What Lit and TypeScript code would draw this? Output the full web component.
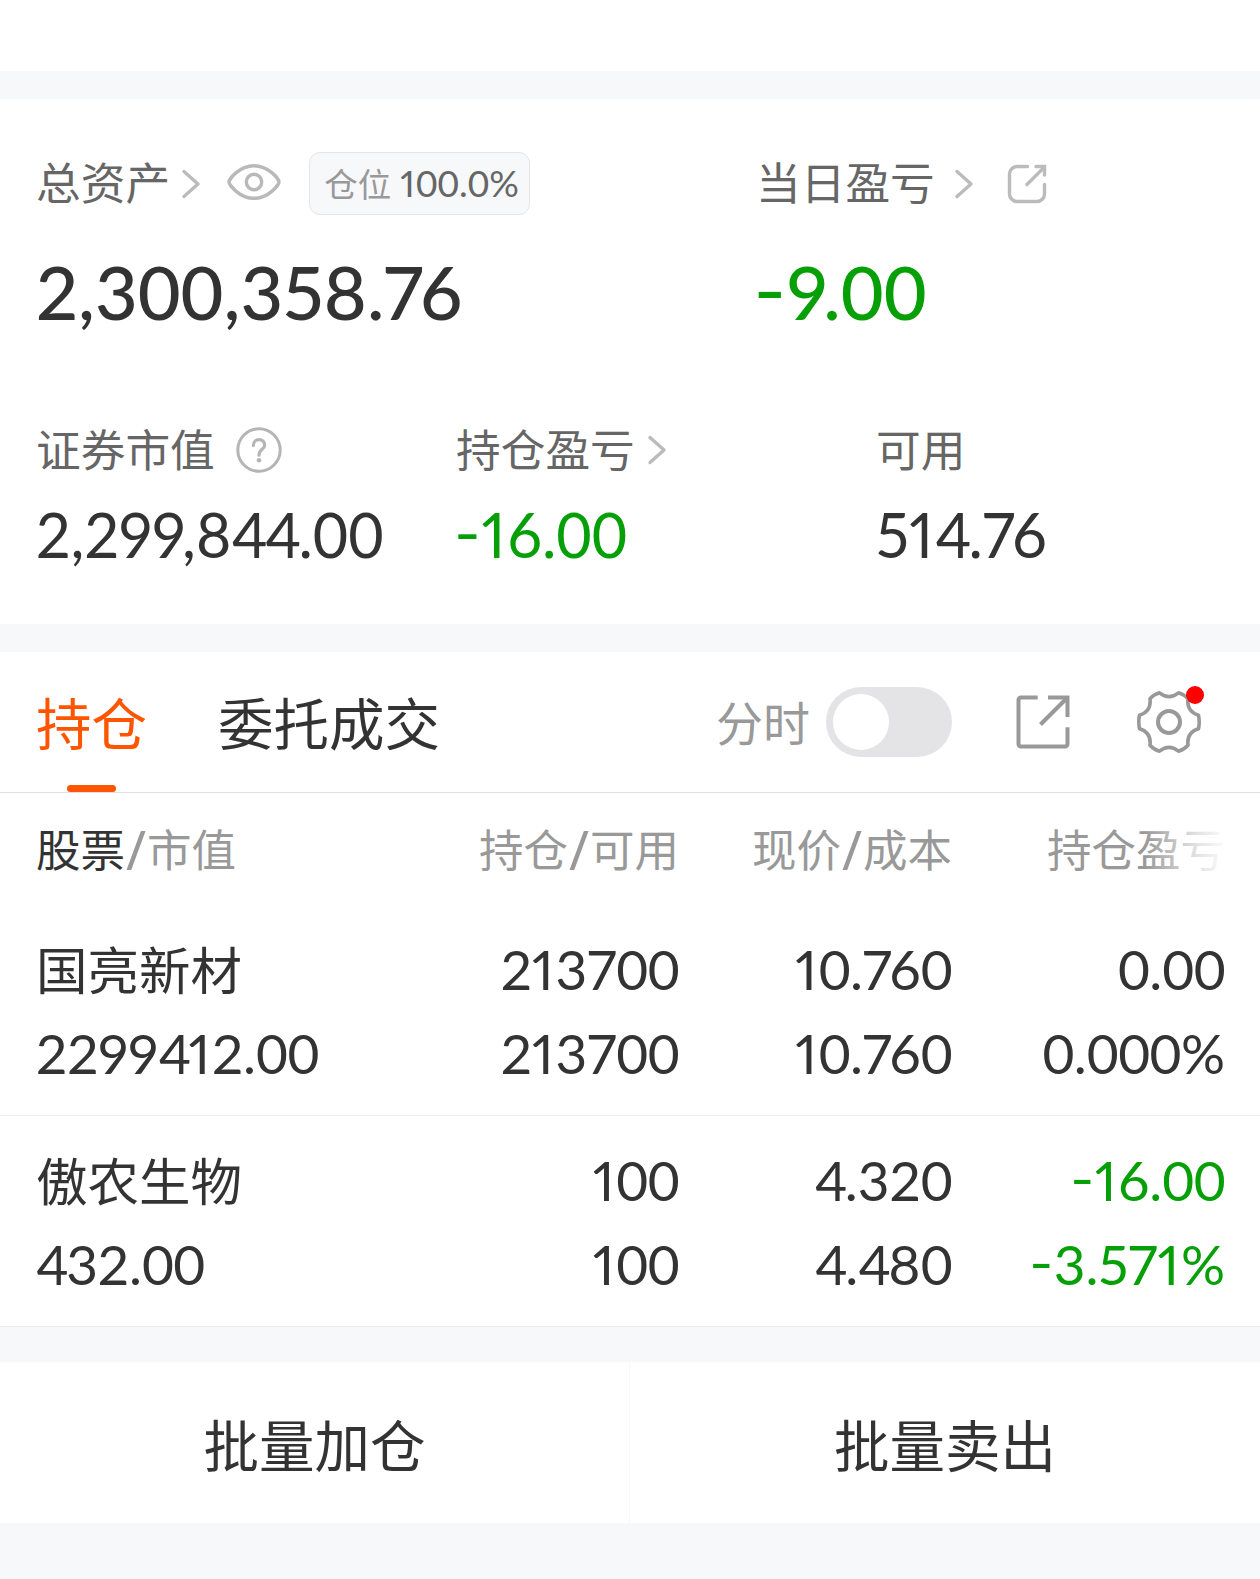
import { LitElement, html, css } from "lit";
import { customElement, property } from "lit/decorators.js";

const chevron = html`<svg class="chev" width="20" height="30" viewBox="0 0 20 30">
  <path d="M3 2.5 L17 15 L3 27.5" fill="none" stroke="#bbb" stroke-width="3.4" stroke-linecap="round" stroke-linejoin="round" />
</svg>`;

const eye = html`<svg width="54" height="38" viewBox="0 0 54 38">
  <g fill="none" stroke="#b9b9b9" stroke-width="3.4">
    <path d="M2 19 C2 16.5 12 2.7 27 2.7 C42 2.7 52 16.5 52 19 C52 21.5 42 35.3 27 35.3 C12 35.3 2 21.5 2 19 Z" stroke-linejoin="round" />
    <circle cx="27" cy="19" r="7.7" />
  </g>
</svg>`;

const shareRound = html`<svg width="40" height="40" viewBox="0 0 40 40">
  <g fill="none" stroke="#bbb" stroke-width="3.4" stroke-linecap="round">
    <path d="M20.5 2.5 H10 A7.5 7.5 0 0 0 2.5 10 V30 A7.5 7.5 0 0 0 10 37.5 H30 A7.5 7.5 0 0 0 37.5 30 V20.5" />
    <path d="M29 2.5 H37.5 V11" />
    <path d="M20 20.5 L36.5 4" />
  </g>
</svg>`;

const question = html`<svg width="46" height="46" viewBox="0 0 46 46">
  <g fill="none" stroke="#b5b5b5">
    <circle cx="23" cy="23" r="21.2" stroke-width="3" />
    <path d="M17.3 18.5 C17.3 10.8 28.7 10.8 28.7 18 C28.7 22.4 23 22.4 23 28.2" stroke-width="3.2" stroke-linecap="round" />
  </g>
  <circle cx="23" cy="33.3" r="2.3" fill="#b5b5b5" />
</svg>`;

const shareSquare = html`<svg width="54" height="54" viewBox="0 0 54 54">
  <g fill="none" stroke="#999" stroke-width="4">
    <path d="M21.7 2.5 H5 A2.5 2.5 0 0 0 2.5 5 V49 A2.5 2.5 0 0 0 5 51.5 H49 A2.5 2.5 0 0 0 51.5 49 V32.3" />
    <path d="M32 2.5 H51.5 V22" />
    <path d="M24.5 29.5 L50.5 3.5" />
  </g>
</svg>`;

const gear = html`<svg class="gear" width="64" height="64" viewBox="0 0 64 64">
  <g fill="none" stroke="#999" stroke-width="3.6" stroke-linejoin="round">
    <path d="M22.5 2.8 Q32 10.4 41.5 2.8 Q47 4.4 51 8.8 Q49.5 21.5 61.5 25.2 Q62.9 32 61.5 38.8 Q49.5 42.5 51 55.2 Q47 59.6 41.5 61.2 Q32 53.6 22.5 61.2 Q17 59.6 13 55.2 Q14.5 42.5 2.5 38.8 Q1.1 32 2.5 25.2 Q14.5 21.5 13 8.8 Q17 4.4 22.5 2.8 Z" />
    <circle cx="32" cy="32" r="11" stroke-width="4" />
  </g>
</svg>`;

/* Zeros take the narrow tabular form, the other digits stay proportional;
   ones, fours and the minus sign get their own side spacing. */
const kinds: Record<string, string> = { "0": "z", "1": "one", "4": "four", "-": "minus" };
const figures = (text: string) =>
  text.split(/(0+|1|4|-)/).filter((p) => p).map((p) => (kinds[p[0]] ? html`<span class=${kinds[p[0]]}>${p}</span>` : p));

const shared = css`
  * { box-sizing: border-box; }
  svg { display: block; flex: none; }
  .num {
    font-family: Lato, "Liberation Sans", sans-serif;
    font-variant-numeric: proportional-nums;
    font-feature-settings: "case";
    white-space: nowrap;
  }
  .z { font-variant-numeric: tabular-nums; }
  .one { letter-spacing: 0.03em; }
  .four { letter-spacing: -0.05em; }
  .minus { display: inline-block; transform: scaleX(1.2); transform-origin: 50% 50%; margin: 0 0.04em 0 0.005em; }
  .green { color: #079f07; }
`;

interface Holding {
  name: string;
  value: string;
  pos: [string, string];
  price: [string, string];
  pnl: [string, string];
  down: boolean;
}

@customElement("asset-summary")
class AssetSummary extends LitElement {
  static styles = [shared, css`
    :host { display: block; height: 525px; background: #fff; color: #333; }
    .top { display: grid; grid-template-columns: 720px 1fr; padding: 53px 0 0 36px; }
    .row { display: flex; align-items: center; }
    .label { font-size: 44.7px; line-height: 62px; padding-bottom: 5px; color: #666; white-space: nowrap; }
    .top .row { height: 63px; }
    .top .chev { margin-left: 11px; }
    .eye { margin-left: 26px; margin-top: -3px; }
    .badge {
      display: flex; align-items: center; justify-content: center; gap: 9px;
      width: 221px; height: 63px; margin-left: 28px; padding-left: 4px;
      border: 1px solid #e4e5e8; border-radius: 11px; background: #f7f8fa;
      font-size: 33.5px; color: #999; line-height: 57px;
    }
    .badge .num { font-size: 37px; color: #666; }
    .badge > * { padding-bottom: 3px; }
    .top .day { margin-left: 8px; }
    .share { margin-left: 33px; }
    .big { font-size: 74px; line-height: 90px; font-weight: 500; margin-top: 32px; }
    .bottom { display: grid; grid-template-columns: 420px 420px 1fr; padding: 82px 0 0 36px; }
    .bottom .row { height: 62px; }
    .bottom .chev { margin-left: 12px; }
    .q { margin-left: 21px; }
    .mid { font-size: 61px; line-height: 74px; margin-top: 17px; }
  `];
  render() {
    return html`
      <div class="top">
        <div>
          <div class="row">
            <span class="label">总资产</span>${chevron}<span class="eye">${eye}</span>
            <span class="badge"><span>仓位</span><span class="num">${figures("100.0%")}</span></span>
          </div>
          <div class="num big">${figures("2,300,358.76")}</div>
        </div>
        <div>
          <div class="row">
            <span class="label">当日盈亏</span><span class="day">${chevron}</span><span class="share">${shareRound}</span>
          </div>
          <div class="num big green">${figures("-9.00")}</div>
        </div>
      </div>
      <div class="bottom">
        <div>
          <div class="row"><span class="label">证券市值</span><span class="q">${question}</span></div>
          <div class="num mid">${figures("2,299,844.00")}</div>
        </div>
        <div>
          <div class="row"><span class="label">持仓盈亏</span>${chevron}</div>
          <div class="num mid green">${figures("-16.00")}</div>
        </div>
        <div>
          <div class="row"><span class="label">可用</span></div>
          <div class="num mid">${figures("514.76")}</div>
        </div>
      </div>`;
  }
}

@customElement("position-tabs")
class PositionTabs extends LitElement {
  static styles = [shared, css`
    :host { display: block; background: #fff; }
    .bar { display: flex; align-items: center; height: 141px; padding: 0 59px 0 36px; border-bottom: 1px solid #dfdfe1; }
    .tab { position: relative; height: 140px; line-height: 139px; font-size: 55.5px; color: #333; margin-right: 71px; white-space: nowrap; }
    .tab.on { color: #ff5500; }
    .tab.on::after {
      content: ""; position: absolute; left: 31px; bottom: 0; width: 49px; height: 7px; border-radius: 4px; background: #ff5500;
    }
    .spacer { flex: 1; }
    .mode { font-size: 47px; line-height: 60px; padding-bottom: 2px; color: #999; }
    .switch { width: 126px; height: 70px; margin-left: 16px; padding: 7px; border-radius: 35px; background: #e4e4e6; }
    .knob { width: 56px; height: 56px; border-radius: 50%; background: #fff; }
    .share { margin-left: 64px; }
    .settings { position: relative; margin-left: 67px; }
    .dot { position: absolute; right: -3px; top: -4px; width: 18px; height: 18px; border-radius: 50%; background: #f00; }
  `];
  render() {
    return html`<div class="bar">
      <span class="tab on">持仓</span><span class="tab">委托成交</span>
      <span class="spacer"></span>
      <span class="mode">分时</span>
      <span class="switch"><div class="knob"></div></span>
      <span class="share">${shareSquare}</span>
      <span class="settings">${gear}<i class="dot"></i></span>
    </div>`;
  }
}

@customElement("holdings-table")
class HoldingsTable extends LitElement {
  @property({ attribute: false }) rows: Holding[] = [];
  static styles = [shared, css`
    :host { display: block; background: #fff; color: #333; }
    .line { display: grid; grid-template-columns: 320px 323px 273px 273px; padding-left: 36px; }
    .line > * { text-align: right; white-space: nowrap; }
    .line > :first-child { text-align: left; }
    .head { height: 112px; padding-top: 24px; font-size: 44.5px; line-height: 62px; color: #999; }
    .head b { font-weight: 400; color: #333; }
    .head i { font: 400 54px/1px "Noto Sans", sans-serif; vertical-align: -3px; margin: 0 1px; }
    .fade { position: relative; }
    .fade::after {
      content: ""; position: absolute; right: -4px; top: 0; width: 84px; height: 62px;
      background: linear-gradient(90deg, rgba(255,255,255,0), rgba(255,255,255,0.7) 60%, #fff);
    }
    .item { height: 211px; padding-top: 22px; border-bottom: 1px solid #ebebed; }
    .item .line { height: 84px; line-height: 84px; font-size: 55px; }
    .item .z { letter-spacing: -0.01em; }
    .item .name { font-size: 51.5px; line-height: 82px; }
  `];
  render() {
    return html`
      <div class="line head">
        <div><b>股票</b><i>/</i>市值</div><div>持仓<i>/</i>可用</div><div>现价<i>/</i>成本</div><div class="fade">持仓盈亏</div>
      </div>
      ${this.rows.map((r) => html`<div class="item">
        ${[0, 1].map((i) => html`<div class="line">
          ${i === 0 ? html`<div class="name">${r.name}</div>` : html`<div class="num">${figures(r.value)}</div>`}
          <div class="num">${figures(r.pos[i])}</div>
          <div class="num">${figures(r.price[i])}</div>
          <div class="num ${r.down ? "green" : ""}">${figures(r.pnl[i])}</div>
        </div>`)}
      </div>`)}`;
  }
}

@customElement("app-root")
class AppRoot extends LitElement {
  private holdings: Holding[] = [
    { name: "国亮新材", value: "2299412.00", pos: ["213700", "213700"], price: ["10.760", "10.760"], pnl: ["0.00", "0.000%"], down: false },
    { name: "傲农生物", value: "432.00", pos: ["100", "100"], price: ["4.320", "4.480"], pnl: ["-16.00", "-3.571%"], down: true },
  ];
  static styles = [shared, css`
    :host {
      display: flex; flex-direction: column; width: 1260px; height: 1579px; overflow: hidden;
      background: #f7f8fa; font-family: "Noto Sans CJK SC", sans-serif;
    }
    .blank { height: 71px; margin-bottom: 28px; background: #fff; }
    asset-summary { margin-bottom: 28px; }
    .actions { display: grid; grid-template-columns: 1fr 1fr; height: 161px; margin-top: 35px; background: #fff; }
    .btn {
      display: flex; align-items: center; justify-content: center;
      font-size: 55.5px; color: #333;
    }
    .btn:first-child { border-right: 1px solid #f7f7f8; }
  `];
  render() {
    return html`
      <div class="blank"></div>
      <asset-summary></asset-summary>
      <position-tabs></position-tabs>
      <holdings-table .rows=${this.holdings}></holdings-table>
      <div class="actions"><div class="btn">批量加仓</div><div class="btn">批量卖出</div></div>`;
  }
}
